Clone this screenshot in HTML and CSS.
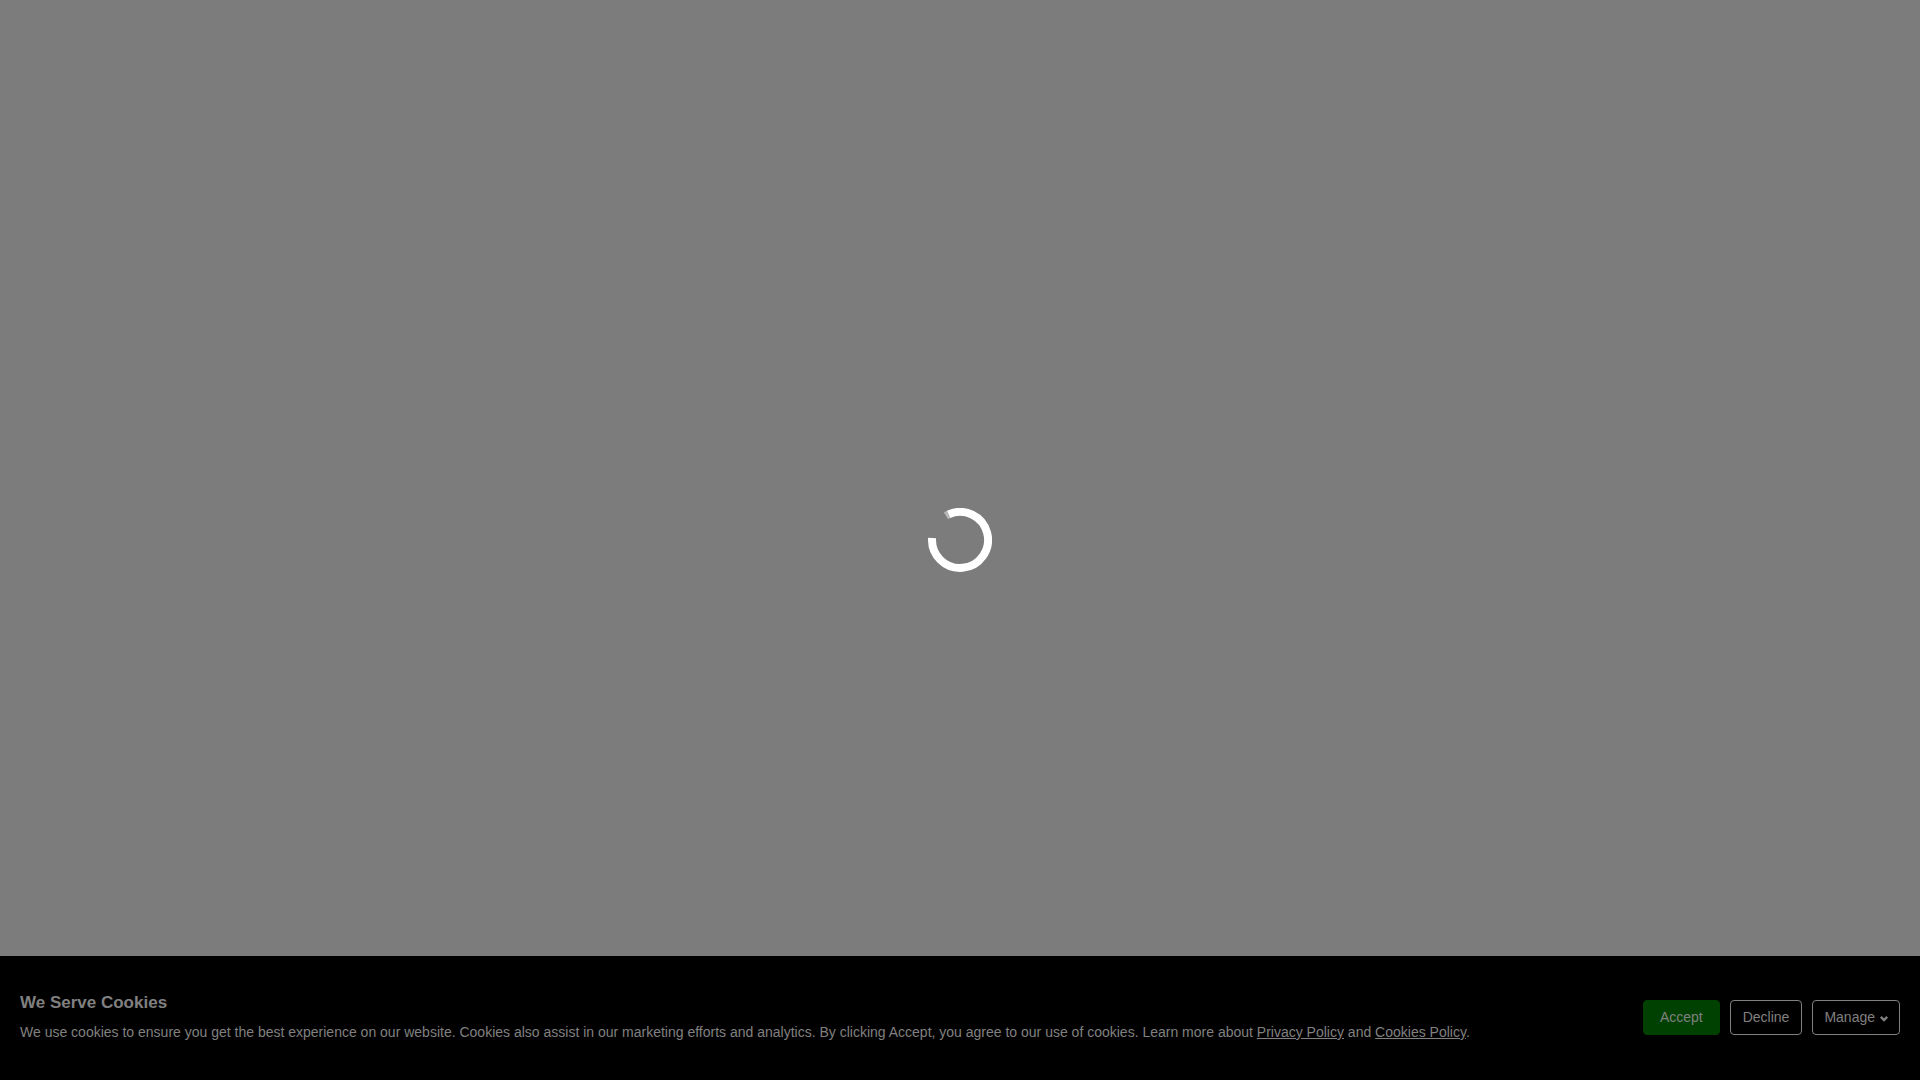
FILE: index.html
```
<!DOCTYPE html>
<html lang="en">
<head>
    <meta charset="UTF-8">
    <meta name="viewport" content="width=device-width, initial-scale=1.0">
    <title>Loading</title>
    <link rel="stylesheet" href="styles.css">
</head>
<body>
    <div class="loader" role="status" aria-label="Loading">
        <svg class="spinner" viewBox="0 0 64 64" fill="none" stroke="#fff" stroke-width="8">
            <path d="M20.6 6.4A28 28 0 1 1 4.1 30"/>
            <path d="M18 7.8A28 28 0 0 1 20.6 6.4" stroke-opacity="0.45"/>
        </svg>
    </div>

    <section class="cookie-bar" aria-labelledby="cookie-title">
        <div class="cookie-text">
            <h2 id="cookie-title">We Serve Cookies</h2>
            <p>We use cookies to ensure you get the best experience on our website. Cookies also assist in our marketing efforts and analytics. By clicking Accept, you agree to our use of cookies. Learn more about <a href="#privacy">Privacy Policy</a> and <a href="#cookies">Cookies Policy</a>.</p>
        </div>
        <div class="cookie-actions">
            <button type="button" class="btn accept-btn">Accept</button>
            <button type="button" class="btn">Decline</button>
            <button type="button" class="btn manage-btn">
                Manage
                <svg class="chevron" viewBox="0 0 8 6" fill="none" stroke="currentColor" stroke-width="2.4" aria-hidden="true">
                    <path d="M0.8 0.9L4 4.1L7.2 0.9"/>
                </svg>
            </button>
        </div>
    </section>
</body>
</html>
```

FILE: styles.css
```
:root {
    --backdrop: #7c7c7c;
    --muted: #808080;
    --accept: #004000;
}

* {
    margin: 0;
    padding: 0;
    box-sizing: border-box;
}

body {
    min-height: 100vh;
    font-family: "Liberation Sans", Arial, sans-serif;
    font-size: 14px;
    color: var(--muted);
    background-color: var(--backdrop);
}

.loader {
    position: fixed;
    inset: 0;
    display: flex;
    align-items: center;
    justify-content: center;
}

.spinner {
    width: 64px;
    height: 64px;
}

.cookie-bar {
    position: fixed;
    left: 0;
    right: 0;
    bottom: 0;
    display: flex;
    align-items: center;
    justify-content: space-between;
    gap: 20px;
    padding: 36px 20px 37px;
    background-color: #000;
}

.cookie-text h2 {
    margin-bottom: 7px;
    font-size: 17px;
    line-height: 22px;
}

.cookie-text p {
    line-height: 22px;
}

.cookie-text a {
    color: inherit;
}

.cookie-actions {
    display: flex;
    flex-shrink: 0;
    gap: 10px;
}

.btn {
    height: 35px;
    padding: 0 12px 2px;
    border: 1px solid var(--muted);
    border-radius: 4px;
    background-color: transparent;
    color: inherit;
    font: inherit;
    cursor: pointer;
}

.accept-btn {
    padding: 0 16px 2px;
    border-color: var(--accept);
    background-color: var(--accept);
}

.manage-btn {
    display: flex;
    align-items: center;
    gap: 5px;
    padding: 0 11px 2px;
}

.chevron {
    width: 8px;
    height: 6px;
    margin-top: 4px;
}
```
